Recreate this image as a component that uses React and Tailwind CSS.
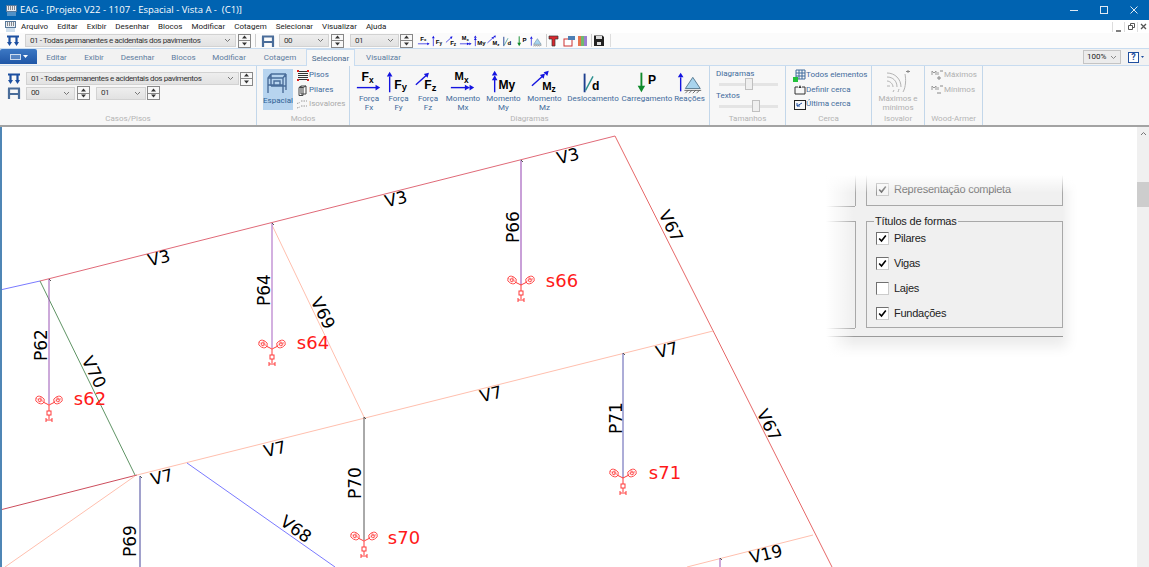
import React from "react";

const Chev = ({ c = "#777" }) => (
  <svg width="7" height="5" viewBox="0 0 7 5" className="shrink-0"><path d="M1 1l2.500 2.500L6 1" fill="none" stroke={c} strokeWidth="1" /></svg>
);

function Select({ text, w }) {
  return (
    <div style={{ width: w }} className="h-[13px] shrink-0 flex items-center justify-between pl-[4px] pr-[4px] bg-gradient-to-b from-[#eeeeee] to-[#e2e2e2] border border-[#d2d2d2] text-[8px] tracking-[-0.38px] text-[#333] whitespace-nowrap overflow-hidden">
      <span>{text}</span><Chev />
    </div>
  );
}

function Spin() {
  return (
    <div className="w-[13px] h-[14px] shrink-0 flex flex-col border border-[#888] bg-[#f8f8f8]">
      <div className="flex-1 flex items-center justify-center border-b border-[#888]"><svg width="7" height="4" viewBox="0 0 7 4"><path d="M3.500 0.500L6 3.500H1z" fill="#333" /></svg></div>
      <div className="flex-1 flex items-center justify-center"><svg width="7" height="4" viewBox="0 0 7 4"><path d="M3.500 3.500L6 0.500H1z" fill="#333" /></svg></div>
    </div>
  );
}

const PilarIcon = () => (
  <svg width="14" height="12" viewBox="0 0 14 12"><path d="M1 1.500h12M3.500 1.500v6M10.500 1.500v6" fill="none" stroke="#1c4fa0" strokeWidth="2.200" /><path d="M1 7l2.500 4L6 7zM8 7l2.500 4L13 7z" fill="#1c4fa0" /></svg>
);
const PisoIcon = () => (
  <svg width="14" height="12" viewBox="0 0 14 12"><path d="M1 1.500h12M1 7h12M2 1.500V12M12 1.500V12" fill="none" stroke="#4a6d9a" strokeWidth="2.200" /></svg>
);

const Txt = ({ x, y, s, c = "#000", w = "bold", children, a }) => (
  <text x={x} y={y} fontSize={s} fill={c} fontWeight={w} textAnchor={a} fontFamily="Liberation Sans, sans-serif">{children}</text>
);

function Dg({ k, w = 28, h = 24 }) {
  const blue = "#1414e0";
  const head = (x, y, d) => {
    if (d === "r") return <path d={`M${x} ${y}l-5 -3v6z`} fill={blue} />;
    if (d === "u") return <path d={`M${x} ${y}l-3 5h6z`} fill={blue} />;
    return <path d={`M${x} ${y}l-5.500 1.500l4 4z`} fill={blue} />;
  };
  let c = null;
  if (k === "fx") c = (<><Txt x="7" y="11" s="13">F</Txt><Txt x="15" y="13" s="9">x</Txt><path d="M2 18h22" stroke={blue} strokeWidth="1.500" />{head(27, 18, "r")}</>);
  if (k === "fy") c = (<><path d="M5 6v17" stroke={blue} strokeWidth="1.500" />{head(5, 1, "u")}<Txt x="10" y="19" s="13">F</Txt><Txt x="18" y="21" s="10">y</Txt></>);
  if (k === "fz") c = (<><path d="M2 15L13 5" stroke={blue} strokeWidth="1.500" />{head(16, 2, "d")}<Txt x="11" y="20" s="13">F</Txt><Txt x="19" y="22" s="10">z</Txt></>);
  if (k === "mx") c = (<><Txt x="6" y="10" s="12">M</Txt><Txt x="16" y="13" s="9">x</Txt><path d="M2 18h20" stroke={blue} strokeWidth="1.500" />{head(22, 18, "r")}{head(27, 18, "r")}</>);
  if (k === "my") c = (<><path d="M5 6v17" stroke={blue} strokeWidth="1.500" />{head(5, 0, "u")}{head(5, 5, "u")}<Txt x="9" y="20" s="13">My</Txt></>);
  if (k === "mz") c = (<><path d="M1 16L12 6" stroke={blue} strokeWidth="1.500" />{head(15, 3, "d")}{head(19, 0, "d")}<Txt x="12" y="21" s="12">M</Txt><Txt x="22" y="23" s="9">z</Txt></>);
  if (k === "d") c = (<><path d="M6 3V23" stroke="#1d3f8f" strokeWidth="2" /><path d="M7 21L15 6" stroke="#2a8f8f" strokeWidth="1.500" /><Txt x="14" y="21" s="13">d</Txt></>);
  if (k === "p") c = (<><path d="M9 2V18" stroke="#0e8a2a" strokeWidth="2" /><path d="M9 23l-4 -7h8z" fill="#0e8a2a" /><Txt x="16" y="14" s="13">P</Txt></>);
  if (k === "r") c = (<><path d="M5 7V22" stroke={blue} strokeWidth="1.500" />{head(5, 2, "u")}<path d="M18 7l8 12H10z" fill="#a8d4ee" stroke="#56788f" /><path d="M9 21h18M10 24l3-3M14 24l3-3M18 24l3-3M22 24l3-3" stroke="#444" strokeWidth="0.800" /></>);
  return <svg width={w} height={h} viewBox="0 0 30 24" className="shrink-0">{c}</svg>;
}

function DiagBtn({ k, a, b, w }) {
  return (
    <div style={{ width: w }} className="shrink-0 flex flex-col items-center">
      <div className="h-[24px] flex items-center"><Dg k={k} /></div>
      <div className="text-[8px] leading-[9px] text-[#3f6b9c] text-center whitespace-nowrap">{a}{b && <br />}{b}</div>
    </div>
  );
}

function Group({ w, label, children }) {
  return (
    <div style={{ width: w }} className="shrink-0 h-full flex flex-col relative border-r border-[#c3d7ea]">
      <div className="flex-1 min-h-0 flex">{children}</div>
      <div className="h-[13px] text-center text-[8px] leading-[13px] text-[#b4b4b4] whitespace-nowrap">{label}</div>
    </div>
  );
}

function SmallRow({ icon, text, c = "#3f6b9c" }) {
  return (
    <div className="h-[14.5px] flex items-center whitespace-nowrap text-[8px]" style={{ color: c }}>
      <span className="w-[13px] h-[13px] flex items-center justify-center shrink-0">{icon}</span>
      <span>{text}</span>
    </div>
  );
}

function Logo() {
  return (
    <svg width="11" height="11" viewBox="0 0 11 11" className="shrink-0">
      <rect x="0.500" y="0.500" width="10" height="6" fill="#e8eef5" stroke="#5a7a9a" />
      <path d="M2 2h7M2 4h7" stroke="#222" strokeWidth="1" strokeDasharray="1 1" />
      <path d="M1 8h9M1 10h9" stroke="#9fc0dd" strokeWidth="1" />
    </svg>
  );
}

function Support({ x, y }) {
  const sp = (cx, cy, d) => (
    <g fill="none" stroke="#ff3b3b" strokeWidth="0.800" transform={`rotate(${d} ${cx} ${cy})`}>
      <ellipse cx={cx} cy={cy} rx="4.500" ry="3.500" /><circle cx={cx} cy={cy} r="1.800" />
      <path d={`M${cx - 4} ${cy}h8M${cx} ${cy - 3}v6`} strokeDasharray="1 1" />
    </g>
  );
  return (
    <g>
      {sp(x - 9, y - 5, 25)}{sp(x + 9, y - 5, -25)}
      <path d={`M${x - 6} ${y - 3}L${x} ${y}L${x + 6} ${y - 3}M${x} ${y}V${y + 6}M${x} ${y + 10}V${y + 14}M${x - 3} ${y + 13}v4M${x + 3} ${y + 13}v4M${x - 3} ${y + 15}h6`} fill="none" stroke="#ff3b3b" strokeWidth="1" />
      <rect x={x - 2} y={y + 6} width="4" height="4" fill="none" stroke="#ff3b3b" />
    </g>
  );
}

const labels = [
  ["V3", 159, 258, -14], ["V3", 396, 199, -14], ["V3", 568, 156, -14],
  ["V7", 162, 477, -14], ["V7", 275, 449, -14], ["V7", 491, 394, -14], ["V7", 667, 350, -14],
  ["V70", 94, 372, 64], ["V69", 323, 313, 64], ["V67", 671, 226, 64], ["V67", 769, 425, 64],
  ["V68", 296, 529, 36], ["V19", 766, 554, -14],
  ["P62", 41, 345, -90], ["P64", 264, 290, -90], ["P66", 513, 227, -90], ["P71", 616, 418, -90], ["P70", 355, 483, -90], ["P69", 130, 541, -90],
];
const sups = [["s62", 90, 398], ["s64", 313, 342], ["s66", 562, 280], ["s71", 665, 472], ["s70", 404, 537]];

function Drawing() {
  return (
    <svg width="1149" height="440" viewBox="0 127 1149 440" className="block" style={{ fontFamily: "DejaVu Sans, sans-serif" }}>
      <path d="M0 290L40 281" stroke="#7a7aff" />
      <path d="M40 281L615 136" stroke="#e06a78" />
      <path d="M615 136L832 567" stroke="#e66868" />
      <path d="M137 475L713 331" stroke="#ffbfae" />
      <path d="M0 510L137 475" stroke="#cc4d5c" />
      <path d="M40 281L135 475" stroke="#5f9465" />
      <path d="M272 225L364 417" stroke="#ffbfae" />
      <path d="M135 476L5 567" stroke="#ffbfae" />
      <path d="M187 463L335 567" stroke="#7a7aff" />
      <path d="M687 567L813 535" stroke="#ffbfae" />
      <path d="M49 279V404" stroke="#9a55b5" />
      <path d="M272 223V348" stroke="#c596d6" strokeWidth="1.500" />
      <path d="M521 160V285" stroke="#c9a0d8" strokeWidth="2" />
      <path d="M623 353V478" stroke="#5a5ab0" />
      <path d="M364 417V540" stroke="#555" />
      <path d="M140 476V567" stroke="#45459a" />
      <path d="M720 558V567" stroke="#9a55b5" />
      <path d="M49 279l2 2M272 223l2 2M521 160l2 2M623 353l2 2M364 417l2 2M140 476l2 2M720 558l2 2" stroke="#555" />
      <Support x={49} y={405} />
      <Support x={272} y={349} />
      <Support x={521} y={285} />
      <Support x={623} y={478} />
      <Support x={364} y={541} />
      {labels.map(([t, x, y, r], i) => (
        <text key={i} x={x} y={y} fontSize="17" textAnchor="middle" dominantBaseline="central" transform={`rotate(${r} ${x} ${y})`} fill="#000">{t}</text>
      ))}
      {sups.map(([t, x, y], i) => (
        <text key={i} x={x} y={y} fontSize="18" textAnchor="middle" dominantBaseline="central" fill="#ff1a1a">{t}</text>
      ))}
    </svg>
  );
}

function Check({ on, dim, label }) {
  return (
    <div className="flex items-center h-[13px] font-['Liberation_Sans'] text-[11px] tracking-[-0.25px]">
      <span className={`w-[13px] h-[13px] shrink-0 flex items-center justify-center border ${dim ? "border-[#999] bg-[#f4f4f4]" : "border-[#707070] bg-white"} [border-right-color:#ccc] [border-bottom-color:#ccc]`}>
        {on && <svg width="9" height="9" viewBox="0 0 9 9"><path d="M1.200 4.500l2.300 2.500L7.800 1.500" fill="none" stroke={dim ? "#666" : "#000"} strokeWidth="1.600" /></svg>}
      </span>
      <span className={`ml-[5px] whitespace-nowrap ${dim ? "text-[#6d6d6d]" : "text-[#222]"}`}>{label}</span>
    </div>
  );
}

function Panel() {
  return (
    <div className="absolute left-[826px] top-[48px] w-[237px] h-[162px] bg-[#f0f0f0] shadow-[4px_10px_12px_rgba(0,0,0,0.08)] font-['Liberation_Sans']">
      <div className="flex flex-col h-full pl-[40px]">
        <div className="h-[31px] border border-t-0 border-[#a8a8a8] flex items-end pl-[9px] pb-[9px]">
          <Check on dim label="Representação completa" />
        </div>
        <div className="relative mt-[15px] h-[107px] border border-[#a8a8a8] pl-[9px] pt-[10px] flex flex-col">
          <span className="absolute left-[7px] top-[-8px] px-[1px] bg-[#f0f0f0] text-[11px] tracking-[-0.2px] leading-[14px] text-[#222] whitespace-nowrap">Títulos de formas</span>
          <div className="flex flex-col gap-[12px]">
            <Check on label="Pilares" />
            <Check on label="Vigas" />
            <Check label="Lajes" />
            <Check on label="Fundações" />
          </div>
        </div>
      </div>
      <div className="absolute left-[29px] top-0 w-px h-[31px] bg-[#a8a8a8]" />
      <div className="absolute left-0 top-[31px] w-[29px] h-px bg-[#a8a8a8]" />
      <div className="absolute left-[29px] top-[46px] w-px h-[107px] bg-[#a8a8a8]" />
      <div className="absolute left-0 top-[46px] w-[29px] h-px bg-[#a8a8a8]" />
      <div className="absolute left-0 top-[153px] w-[29px] h-px bg-[#a8a8a8]" />
      <div className="absolute left-0 bottom-0 w-full h-px bg-[#9a9a9a]" />
      <div className="absolute left-[-12px] top-[-12px] h-[200px] w-[12px] bg-white" />
      <div className="absolute left-[-12px] top-[-12px] h-[12px] w-[270px] bg-white" />
      <div className="absolute left-0 top-0 h-[190px] w-[28px] bg-gradient-to-r from-white to-transparent" />
      <div className="absolute left-0 top-0 w-[255px] h-[18px] bg-gradient-to-b from-white to-transparent" />
    </div>
  );
}

const tabs = [["Editar", 39], ["Exibir", 36], ["Desenhar", 51], ["Blocos", 41], ["Modificar", 50], ["Cotagem", 52]];

export default function App() {
  return (
    <div className="w-[1149px] h-[567px] overflow-hidden flex flex-col bg-white font-['Roboto'] text-[8px] text-[#222]">
      {/* title */}
      <div className="h-[20px] shrink-0 bg-[#0063b1] flex items-center text-white pl-[6px]">
        <Logo />
        <span className="ml-[3px] font-['Open_Sans'] text-[9.5px] whitespace-pre">EAG - [Projeto V22 - 1107 - Espacial - Vista A -  (C1)]</span>
        <div className="ml-auto flex items-center">
          <span className="w-[30px] flex justify-center"><svg width="8" height="8" viewBox="0 0 8 8"><path d="M0 4.500h8" stroke="#dfe9f3" /></svg></span>
          <span className="w-[30px] flex justify-center"><svg width="8" height="8" viewBox="0 0 8 8"><rect x="0.500" y="0.500" width="7" height="7" fill="none" stroke="#dfe9f3" /></svg></span>
          <span className="w-[30px] flex justify-center"><svg width="8" height="8" viewBox="0 0 8 8"><path d="M0.500 0.500l7 7M7.500 0.500l-7 7" stroke="#dfe9f3" /></svg></span>
        </div>
      </div>
      {/* menu */}
      <div className="h-[13px] shrink-0 flex items-center pl-[5px]">
        <Logo />
        <div className="flex ml-[5px] gap-[9px] whitespace-nowrap">
          {["Arquivo", "Editar", "Exibir", "Desenhar", "Blocos", "Modificar", "Cotagem", "Selecionar", "Visualizar", "Ajuda"].map(t => <span key={t}>{t}</span>)}
        </div>
        <div className="ml-auto flex items-center text-[#555]">
          <span className="w-[12px] h-[10px] flex items-end justify-center border-l border-[#ddd]"><svg width="6" height="6" viewBox="0 0 6 6"><path d="M0 5h5" stroke="#555" strokeWidth="1.500" /></svg></span>
          <span className="w-[13px] h-[10px] flex items-center justify-center border-l border-[#ddd]"><svg width="7" height="7" viewBox="0 0 7 7"><path d="M0.500 2.500h4v4h-4zM2.500 2.500v-2h4v4h-2" fill="none" stroke="#555" /></svg></span>
          <span className="w-[12px] h-[10px] flex items-center justify-center border-l border-[#ddd]"><svg width="7" height="7" viewBox="0 0 7 7"><path d="M1 1l5 5M6 1l-5 5" stroke="#555" strokeWidth="1.300" /></svg></span>
        </div>
      </div>
      {/* toolbar */}
      <div className="h-[16px] shrink-0 flex items-center pl-[6px] bg-[#fbfbfb] border-b border-[#c8dcf0]">
        <PilarIcon />
        <div className="w-[5px]" />
        <Select text="01 - Todas permanentes e acidentais dos pavimentos" w={211} />
        <div className="w-[2px]" />
        <Spin />
        <div className="w-[5px] h-[13px] border-r border-[#ccc]" />
        <div className="w-[5px]" />
        <PisoIcon />
        <div className="w-[4px]" />
        <Select text="00" w={50} />
        <div className="w-[2px]" />
        <Spin />
        <div className="w-[6px]" />
        <Select text="01" w={49} />
        <div className="w-[1px]" />
        <Spin />
        <div className="flex items-center ml-[4px]">
          {["fx", "fy", "fz", "mx", "my", "mz", "d", "p", "r"].map(k => <Dg key={k} k={k} w={14} h={12} />)}
        </div>
        <div className="w-px h-[13px] bg-[#ccc] ml-[3px] mr-[1px]" />
        <svg width="11" height="12" viewBox="0 0 11 12"><path d="M1 1h9v3H7v7H4V4H1z" fill="#d9272e" stroke="#333" strokeWidth="0.700" /></svg>
        <svg width="13" height="12" viewBox="0 0 13 12" className="ml-[4px]"><rect x="1" y="4" width="8" height="7" fill="#fff" stroke="#c33" /><rect x="5" y="1" width="7" height="4" fill="#4d7fb5" /></svg>
        <svg width="10" height="12" viewBox="0 0 10 12" className="ml-[2px]"><rect x="0" y="1" width="3" height="10" fill="#e6734f" /><rect x="3" y="1" width="3" height="10" fill="#6fb96f" /><rect x="6" y="1" width="3" height="10" fill="#9a7fd0" /></svg>
        <div className="w-px h-[13px] bg-[#ccc] ml-[3px] mr-[2px]" />
        <svg width="10" height="11" viewBox="0 0 10 11"><path d="M0 0.500h8.500L10 2v9H0z" fill="#222" /><rect x="2" y="1" width="6" height="3" fill="#ddd" /><rect x="3" y="7" width="4" height="3" fill="#ddd" /></svg>
        <div className="w-px h-[13px] bg-[#ddd] ml-[6px]" />
      </div>
      {/* tabs */}
      <div className="h-[17px] shrink-0 flex items-end bg-[#f2f2f2] border-b border-[#c8dcf0] relative">
        <div className="w-[37px] h-[15px] self-start bg-gradient-to-b from-[#3c78c4] to-[#1f56a6] rounded-t-[2px] flex items-center justify-center gap-[2px] shrink-0">
          <span className="w-[11px] h-[6px] border border-white/70 bg-white/20" />
          <svg width="5" height="3" viewBox="0 0 5 3"><path d="M0 0h5L2.500 3z" fill="#fff" /></svg>
        </div>
        {tabs.map(([t, w]) => (
          <div key={t} style={{ width: w }} className="h-[15px] flex items-center justify-center text-[#5d7c9e] shrink-0">{t}</div>
        ))}
        <div className="w-[49px] h-[17px] mb-[-1px] pt-[1px] bg-[#f7f7f7] border border-b-0 border-[#c8dcf0] flex items-center justify-center text-[#4a6a8e] shrink-0">Selecionar</div>
        <div className="w-[57px] h-[15px] flex items-center justify-center text-[#5d7c9e] shrink-0">Visualizar</div>
        <div className="ml-auto flex items-center mr-[5px] mb-[1px]">
          <div className="w-[38px] h-[14px] border border-[#c4c4c4] bg-[#ececec] flex items-center justify-between px-[3px]">100%<Chev c="#888" /></div>
          <div className="ml-[7px] w-[11px] h-[11px] border border-[#1f4fa0] bg-white text-[#1f4fa0] text-[9px] leading-[9px] font-bold text-center">?</div>
          <svg width="3" height="2" viewBox="0 0 5 3" className="ml-[2px]"><path d="M0 0h5L2.500 3z" fill="#1f4fa0" /></svg>
        </div>
      </div>
      {/* ribbon */}
      <div className="h-[59px] shrink-0 flex bg-[#f7f7f7]">
        <Group w={257} label="Casos/Pisos">
          <div className="flex flex-col pl-[7px] pt-[5px]">
            <div className="flex items-center h-[15px]">
              <PilarIcon /><div className="w-[5px]" />
              <Select text="01 - Todas permanentes e acidentais dos pavimentos" w={213} /><div className="w-[1px]" /><Spin />
            </div>
            <div className="flex items-center h-[14px]">
              <PisoIcon /><div className="w-[5px]" />
              <Select text="00" w={49} /><div className="w-[2px]" /><Spin /><div className="w-[6px]" />
              <Select text="01" w={50} /><div className="w-[1px]" /><Spin />
            </div>
          </div>
        </Group>
        <Group w={93} label="Modos">
          <div className="ml-[6px] mt-[3px] w-[30px] h-[41px] bg-[#b7d4ef] flex flex-col items-center shrink-0">
            <svg width="24" height="24" viewBox="0 0 24 24" className="mt-[2px]" fill="none" stroke="#4a6d9a"><path d="M5 3h15M5 3L2 7v15M5 3v12M20 3v16M20 3l-3 4v15M2 7h15M2 14h15M5 15h15M8 10h6v5H8z" strokeWidth="1.400" /></svg>
            <span className="text-[8px] text-[#2e5f94] leading-[10px] mt-[1px]">Espacial</span>
          </div>
          <div className="ml-[3px] mt-[2px] flex flex-col">
            <SmallRow text="Pisos" icon={<svg width="12" height="11" viewBox="0 0 12 11"><path d="M1 1.500h10M1 3.500h10M1 5.500h10M1 7.500h10M1 9.500h10" stroke="#333" /><path d="M0 0h2v2H0zM10 0h2v2h-2zM0 9h2v2H0zM10 9h2v2h-2z" fill="#d22" /></svg>} />
            <SmallRow text="Pilares" icon={<svg width="9" height="12" viewBox="0 0 9 12" fill="none" stroke="#444"><path d="M3 2h5v8H3zM1 3.500h4V11.500H1zM3 2L1 3.500M8 2L5 3.500" /></svg>} />
            <SmallRow c="#a9a9a9" text="Isovalores" icon={<svg width="13" height="11" viewBox="0 0 13 11" stroke="#999" strokeWidth="1" fill="none"><path d="M1 4.500l3 -1M1 9l3 -1M5 2h6M5 7h6" strokeDasharray="1.500 1" /></svg>} />
          </div>
        </Group>
        <Group w={360} label="Diagramas">
          <div className="flex pl-[4px] pt-[4px]">
            <DiagBtn k="fx" a="Força" b="Fx" w={30} />
            <DiagBtn k="fy" a="Força" b="Fy" w={29} />
            <DiagBtn k="fz" a="Força" b="Fz" w={30} />
            <DiagBtn k="mx" a="Momento" b="Mx" w={40} />
            <DiagBtn k="my" a="Momento" b="My" w={41} />
            <DiagBtn k="mz" a="Momento" b="Mz" w={41} />
            <DiagBtn k="d" a="Deslocamento" w={56} />
            <DiagBtn k="p" a="Carregamento" w={52} />
            <DiagBtn k="r" a="Reações" w={33} />
          </div>
        </Group>
        <Group w={76} label="Tamanhos">
          <div className="flex flex-col pl-[6px] pt-[3px] text-[#3f6b9c] w-full">
            <span className="leading-[10px]">Diagramas</span>
            <div className="relative h-[12px] mt-[-1px] flex items-center ml-[3px] mr-[7px]">
              <div className="h-[3px] w-full bg-[#e4e4e4]" />
              <div className="absolute left-[26px] top-0 w-[8px] h-[12px] bg-[#efefef] border border-[#c0c0c0]" />
            </div>
            <span className="leading-[10px] mt-[1px]">Textos</span>
            <div className="relative h-[12px] mt-[-1px] flex items-center ml-[3px] mr-[7px]">
              <div className="h-[3px] w-full bg-[#e4e4e4]" />
              <div className="absolute left-[33px] top-0 w-[8px] h-[12px] bg-[#efefef] border border-[#c0c0c0]" />
            </div>
          </div>
        </Group>
        <Group w={86} label="Cerca">
          <div className="pl-[7px] pt-[2px] flex flex-col">
            <SmallRow text="Todos elementos" icon={<svg width="13" height="13" viewBox="0 0 13 13" fill="none"><path d="M3 1h9v9H3zM3 4h9M3 7h9M6 1v9M9 1v9" stroke="#3f6b9c" /><rect x="0" y="8" width="5" height="5" fill="#22c03a" /></svg>} />
            <SmallRow text="Definir cerca" icon={<svg width="12" height="11" viewBox="0 0 12 11" fill="none" stroke="#333"><path d="M1 3v7h10V3H8M1 3h3" /><path d="M6 1l1.500 3h-3z" fill="#333" stroke="none" /></svg>} />
            <SmallRow text="Última cerca" icon={<svg width="12" height="11" viewBox="0 0 12 11" fill="none" stroke="#222"><rect x="0.500" y="1.500" width="11" height="9" /><path d="M8 4L3 7M3 7h3M3 7V4" stroke="#1f4fa0" /></svg>} />
          </div>
        </Group>
        <Group w={53} label="Isovalor">
          <div className="w-full flex flex-col items-center pt-[4px]">
            <svg width="26" height="24" viewBox="0 0 26 24" fill="none" stroke="#b4b4b4"><path d="M2 3c8 0 14 6 14 14M2 7c6 0 10 4 10 10M2 11c3 0 6 3 6 6M20 4c1 5 1 13-2 18M14 19c0 1-1 2-1 3M9 20l-1 2M2 16h3" /><path d="M21 1.500h4M23 0v3" stroke="#888" /></svg>
            <div className="text-[8px] leading-[9px] text-[#b0b0b0] text-center whitespace-nowrap">Máximos e<br />mínimos</div>
          </div>
        </Group>
        <Group w={58} label="Wood-Armer">
          <div className="pl-[6px] pt-[2px] flex flex-col">
            <SmallRow c="#b0b0b0" text="Máximos" icon={<svg width="13" height="12" viewBox="0 0 13 12" stroke="#999" fill="none"><path d="M1 2v4M1 2l2 2 2-2v4M7 3v3" /><path d="M9 2h3M6 9h4M8 7v4" stroke="#888" /></svg>} />
            <SmallRow c="#b0b0b0" text="Mínimos" icon={<svg width="13" height="12" viewBox="0 0 13 12" stroke="#999" fill="none"><path d="M1 2v4M1 2l2 2 2-2v4M7 3v3" /><path d="M9 2h3M6 9h4" stroke="#888" /></svg>} />
          </div>
        </Group>
      </div>
      <div className="h-[2px] shrink-0 bg-[#a3a3a3]" />
      {/* canvas */}
      <div className="flex-1 min-h-0 flex relative">
        <div className="w-[2px] shrink-0 bg-[#4f86b5] relative z-10" />
        <div className="flex-1 min-w-0 relative overflow-hidden">
          <div className="ml-[-2px]"><Drawing /></div>
        </div>
        <div className="w-[12px] shrink-0 bg-[#f0f0f0] flex flex-col items-center relative z-10">
          <svg width="7" height="5" viewBox="0 0 7 5" className="mt-[4px]"><path d="M1 4l2.500 -2.500L6 4" fill="none" stroke="#777" /></svg>
          <div className="mt-[46px] w-full h-[25px] bg-[#cdcdcd]" />
        </div>
        <Panel />
      </div>
    </div>
  );
}
